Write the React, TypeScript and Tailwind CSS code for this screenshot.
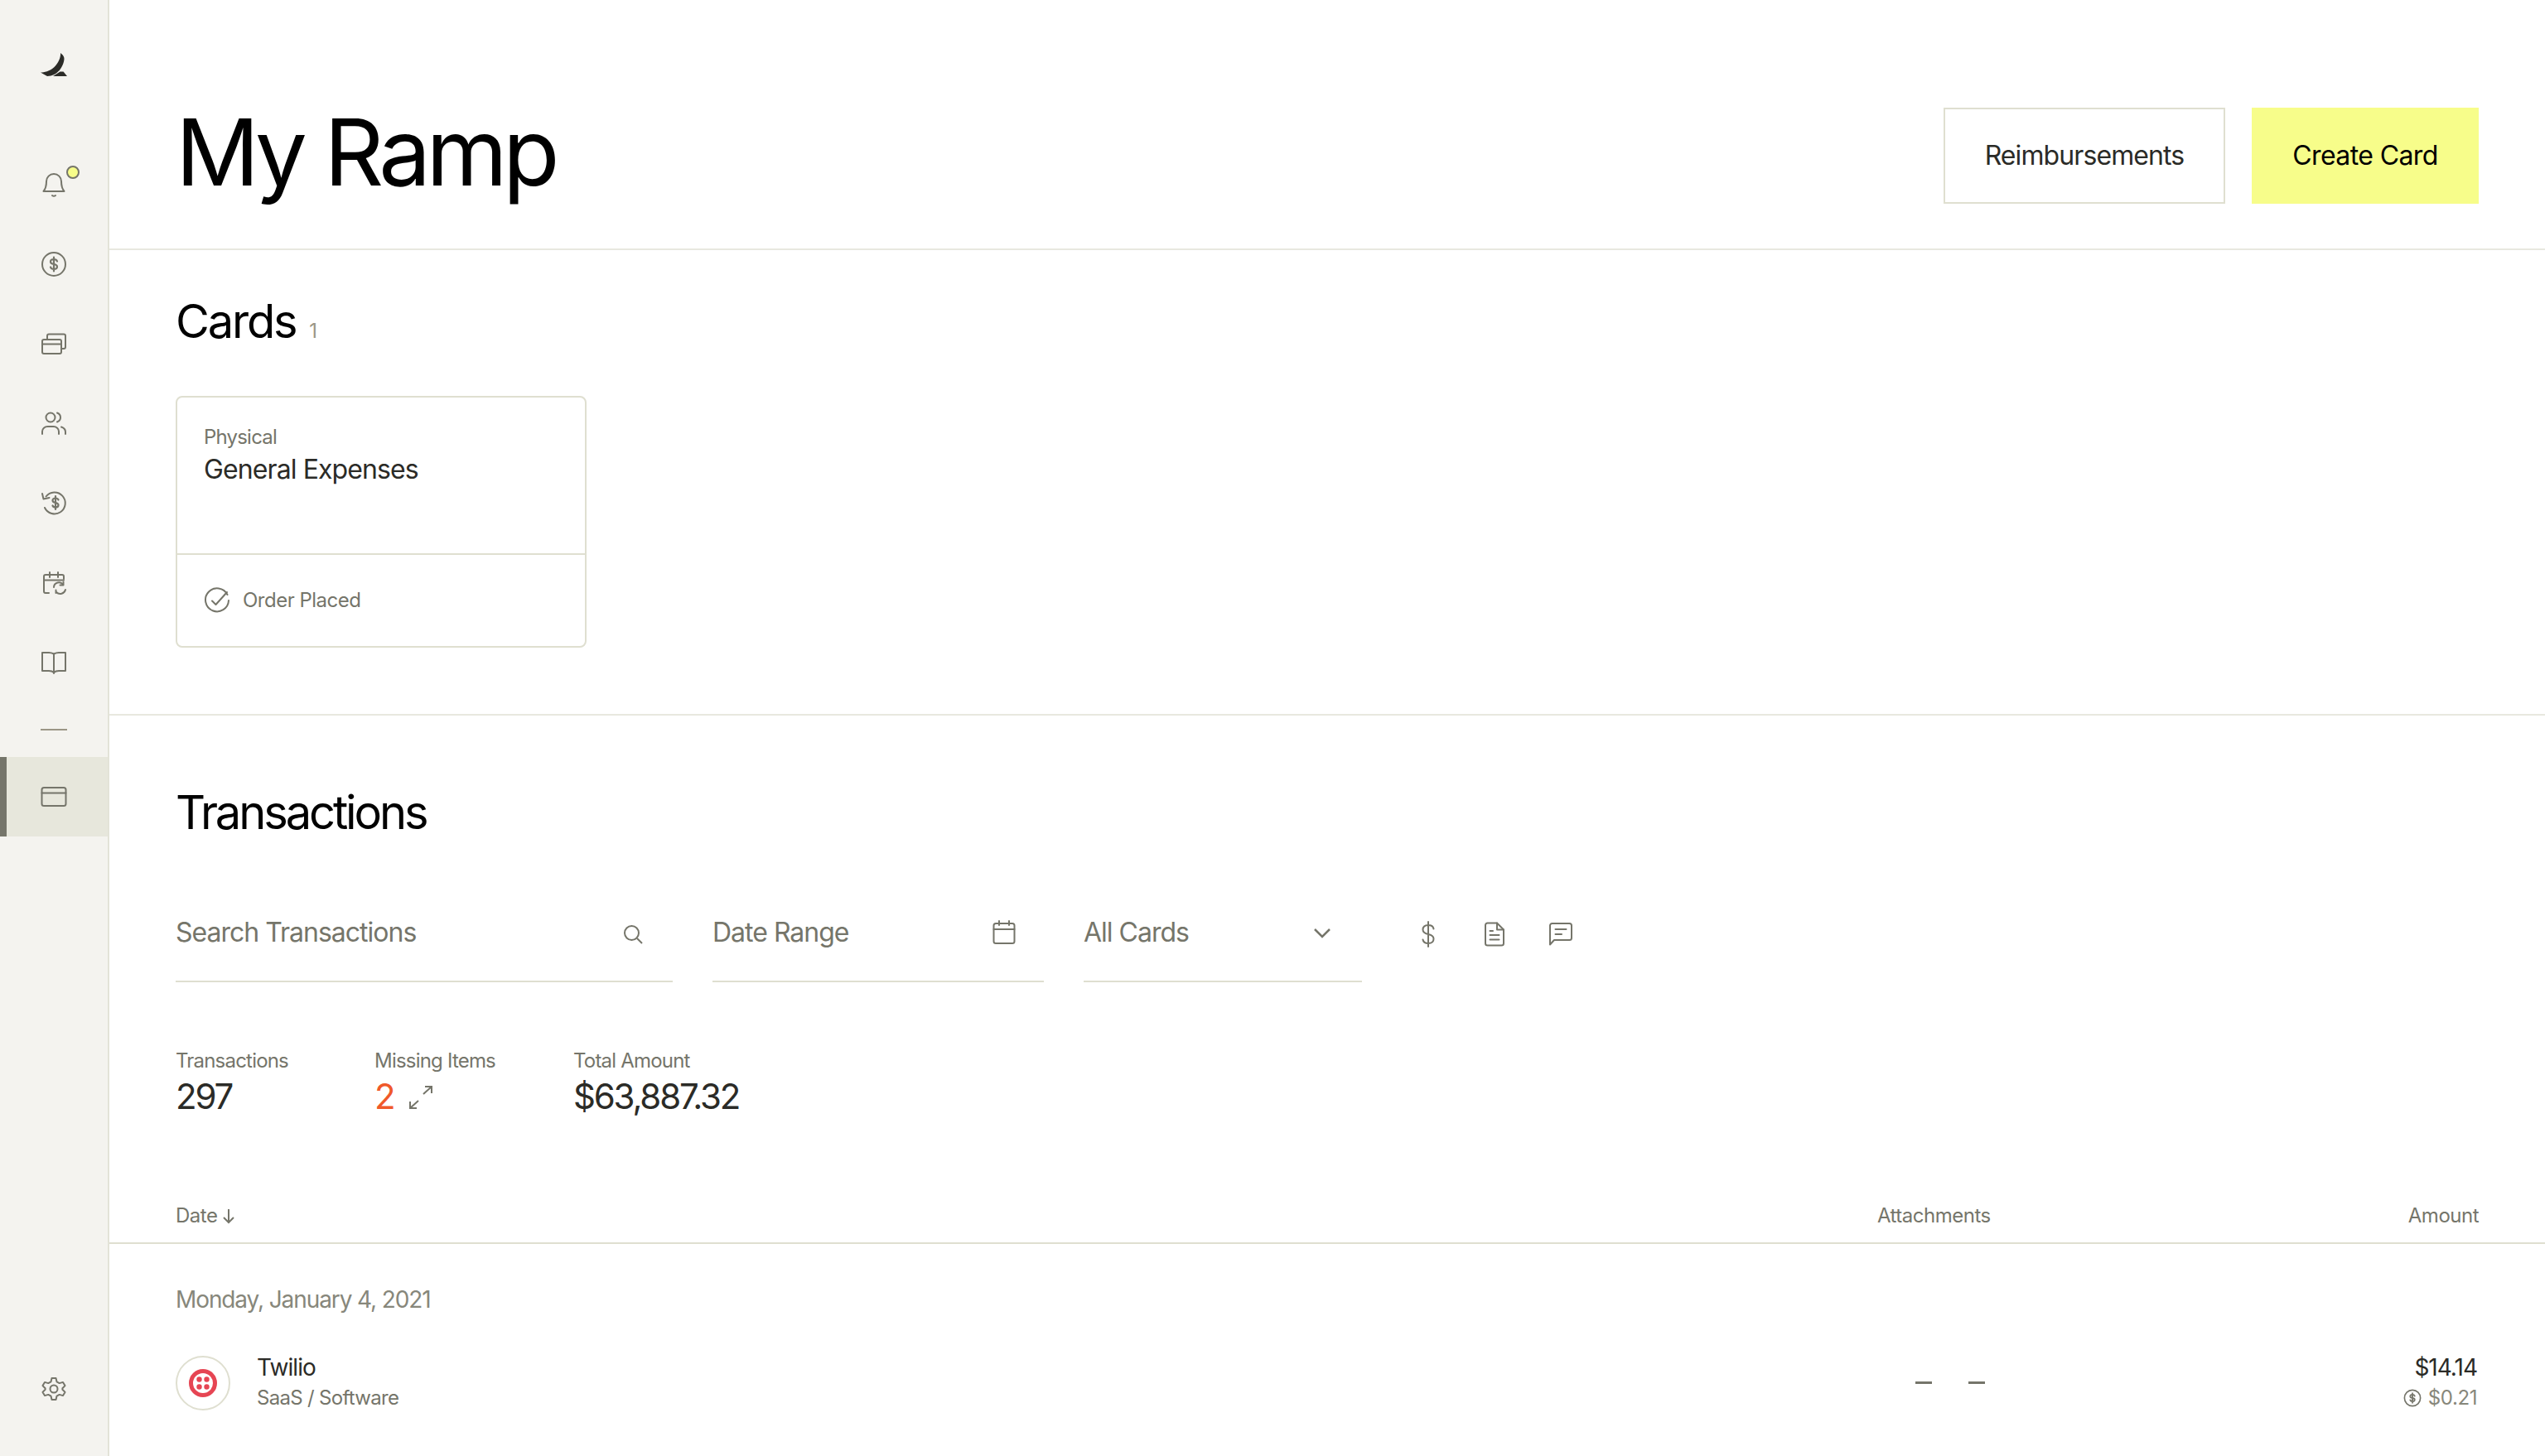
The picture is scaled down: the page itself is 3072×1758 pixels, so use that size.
import React from "react";

const Icon: React.FC<{ size?: number; children: React.ReactNode; className?: string }> = ({ size = 32, children, className }) => (
  <svg
    width={size}
    height={size}
    viewBox="0 0 32 32"
    fill="none"
    stroke="#75756a"
    strokeWidth={2}
    strokeLinecap="round"
    strokeLinejoin="round"
    className={className}
  >
    {children}
  </svg>
);

const dollar = "M20 12.5c-.5-1.5-2-2.5-4-2.5-2.5 0-4 1.3-4 3s1.5 2.6 4 3 4 1.3 4 3-1.5 3-4 3c-2 0-3.5-1-4-2.5M16 7.5v17";

const NavItem: React.FC<{ children: React.ReactNode }> = ({ children }) => (
  <div className="relative flex h-[96.3px] items-center justify-center">{children}</div>
);

const Sidebar = () => (
  <aside className="flex h-full w-[132px] shrink-0 flex-col border-r-2 border-[#e3e3d8] bg-[#f4f3ef]">
    <div className="flex h-[174px] shrink-0 justify-center pt-[62px]">
      <svg width="32" height="32" viewBox="0 0 32 32" fill="#2b2b27">
        <path d="M24 2C25.500 3.500 28.500 5 28.500 9 28 18 20.500 30 8 30L0 25.500C4 25.500 11 24 16.500 19 21 14.500 24.500 8 24 2Z" />
        <path d="M15 30 23.500 24.500 27.500 24.500 32 30Z" />
      </svg>
    </div>
    <NavItem>
      <Icon>
        <path d="M3.500 25C6 22 7 19 7 13A9 9 0 0 1 25 13C25 19 26 22 28.500 25Z" />
        <path d="M14 30Q16 31.500 18 30" />
      </Icon>
      <span className="absolute left-[80px] top-[26px] size-[16px] rounded-full border-2 border-[#75756a] bg-[#f7fd8a]" />
    </NavItem>
    <NavItem>
      <Icon className="mt-[2px]">
        <circle cx="16" cy="16" r="14" />
        <path d={dollar} strokeWidth={2.200} />
      </Icon>
    </NavItem>
    <NavItem>
      <Icon>
        <rect x="2" y="11" width="23" height="17" rx="2" />
        <path d="M2 16.500H25" />
        <path d="M8 11V6.500A2 2 0 0 1 10 4.500H28A2 2 0 0 1 30 6.500V20A2 2 0 0 1 28 22H25" />
      </Icon>
    </NavItem>
    <NavItem>
      <Icon>
        <circle cx="12" cy="9" r="5.500" />
        <path d="M2 29V26C2 22.500 5 20 8.500 20H15.500C19 20 22 22.500 22 26V29" />
        <path d="M20 3.500C22.500 4.500 24 6.500 24 9S22.500 13.500 20 14.500" />
        <path d="M25 20.500C28 21.500 30 23.500 30 26.500V29" />
      </Icon>
    </NavItem>
    <NavItem>
      <Icon>
        <path d="M6.500 8.500A13 13 0 1 1 5 22" />
        <path d="M2 5 3.500 11.500 10.500 10" />
        <path d="M21.500 12.500c-.5-1.200-1.800-2-3.500-2-2.200 0-3.500 1.100-3.500 2.700s1.300 2.300 3.500 2.800 3.500 1.100 3.500 2.700-1.300 2.800-3.500 2.800c-1.700 0-3-.8-3.500-2M18 8v16" strokeWidth={2.200} />
      </Icon>
    </NavItem>
    <NavItem>
      <Icon>
        <path d="M10 28H6A2 2 0 0 1 4 26V8A2 2 0 0 1 6 6H26A2 2 0 0 1 28 8V11" />
        <path d="M4 12.500H28M11 3V9M21 3V9" />
        <path d="M16 21A6 6 0 0 1 27 18M30 24A6.500 6.500 0 0 1 19 27" />
        <path d="M27.500 14.500V18.500H23.500M18.500 24.500V28" />
      </Icon>
    </NavItem>
    <NavItem>
      <Icon className="-mt-[2px]">
        <path d="M16 6.500 Q13 5 10 5H2V27H10Q14 27 16 29Q18 27 22 27H30V5H22Q19 5 16 6.500Z" />
        <path d="M16 6.500V30" />
      </Icon>
    </NavItem>
    <div className="flex h-[66px] shrink-0 items-center justify-center">
      <div className="h-[2px] w-[32px] bg-[#9b9686]" />
    </div>
    <div className="flex h-[96px] shrink-0 items-center justify-center border-l-[8px] border-[#75756a] bg-[#e7e7dc] pr-[8px]">
      <Icon>
        <rect x="1.500" y="5" width="29" height="22" rx="2.500" />
        <path d="M1.500 11.500H30.500" />
      </Icon>
    </div>
    <div className="mt-auto flex justify-center pb-[65px]">
      <Icon>
        <circle cx="16" cy="16" r="4.500" />
        <path d="M13.500 3H18.500L19.500 7.300 22.700 9.100 27 7.900 29.500 12.100 26.400 15.300V16.700L29.500 19.900 27 24.100 22.700 22.900 19.500 24.700 18.500 29H13.500L12.500 24.700 9.300 22.900 5 24.100 2.500 19.900 5.600 16.700V15.300L2.500 12.100 5 7.900 9.300 9.100 12.500 7.300Z" />
      </Icon>
    </div>
  </aside>
);

const FilterField: React.FC<{ label: string; width: string; children: React.ReactNode }> = ({ label, width, children }) => (
  <div className={`flex h-[79px] items-start justify-between border-b-2 border-[#dfdfd0] ${width}`}>
    <span className="text-[32px] leading-[38px] tracking-[-1px] text-[#75756a]">{label}</span>
    {children}
  </div>
);

const Stat: React.FC<{ label: string; width: string; children: React.ReactNode }> = ({ label, width, children }) => (
  <div className={width}>
    <div className="text-[24px] leading-[28px] tracking-[-0.8px] text-[#75756a]">{label}</div>
    <div className="mt-[3px] flex h-[50px] items-center text-[42px] tracking-[-2.2px] text-[#2b2b27]">{children}</div>
  </div>
);

export default function App() {
  return (
    <div className="flex h-[1758px] w-[3072px] overflow-hidden bg-white font-['Inter',sans-serif]">
      <Sidebar />
      <main className="flex min-w-0 flex-1 flex-col">
        <header className="flex h-[302px] shrink-0 items-start justify-between border-b-2 border-[#e8e8df] pl-[80px] pr-[80px] pt-[130px]">
          <h1 className="-mt-[11px] text-[112px] font-normal leading-[128px] tracking-[-5.6px] text-black">My Ramp</h1>
          <div className="flex gap-[32px]">
            <button className="h-[116px] w-[340px] border-2 border-[#dfdfd0] text-[32px] tracking-[-0.9px] text-[#2b2b27]">Reimbursements</button>
            <button className="h-[116px] w-[274px] bg-[#f7fd8a] text-[32px] tracking-[-0.6px] text-black">Create Card</button>
          </div>
        </header>

        <section className="h-[562px] shrink-0 border-b-2 border-[#e8e8df] px-[80px] pt-[51px]">
          <div className="flex items-baseline gap-[16px]">
            <h2 className="text-[56px] font-normal leading-[70px] tracking-[-2.2px] text-black">Cards</h2>
            <span className="text-[24px] text-[#9b9686]">1</span>
          </div>
          <div className="mt-[55px] w-[496px] rounded-[8px] border-2 border-[#dfdfd0]">
            <div className="h-[190px] border-b-2 border-[#dfdfd0] px-[32px] pt-[33px]">
              <div className="text-[24px] leading-[30px] tracking-[-0.8px] text-[#75756a]">Physical</div>
              <div className="mt-[5px] text-[32px] leading-[38px] tracking-[-0.9px] text-[#2b2b27]">General Expenses</div>
            </div>
            <div className="flex h-[110px] items-center gap-[15px] px-[32px]">
              <Icon>
                <path d="M28.500 9A14 14 0 1 0 30 16" />
                <path d="M10 16.500 14.500 21 28 6" />
              </Icon>
              <span className="text-[24px] tracking-[-0.5px] text-[#75756a]">Order Placed</span>
            </div>
          </div>
        </section>

        <section className="flex-1">
          <div className="px-[80px] pt-[82px]">
            <h2 className="text-[56px] font-normal leading-[70px] tracking-[-3.1px] text-black">Transactions</h2>
            <div className="mt-[91px] flex items-start">
              <FilterField label="Search Transactions" width="w-[600px]">
                <svg width="26" height="26" viewBox="0 0 26 26" fill="none" stroke="#75756a" strokeWidth="2" className="mr-[35px] mt-[8px]">
                  <circle cx="11.500" cy="11.500" r="8.500" />
                  <path d="M18 18 24 24" />
                </svg>
              </FilterField>
              <FilterField label="Date Range" width="ml-[48px] w-[400px]">
                <Icon className="mr-[32px] mt-[3px]">
                  <rect x="3.500" y="5" width="25" height="24" rx="2.500" />
                  <path d="M3.500 12H28.500M10 2V7M22 2V7" />
                </Icon>
              </FilterField>
              <FilterField label="All Cards" width="ml-[48px] w-[336px]">
                <svg width="20" height="12" viewBox="0 0 20 12" fill="none" stroke="#75756a" strokeWidth="2.500" className="mr-[38px] mt-[14px]">
                  <path d="M1 1 10 10 19 1" />
                </svg>
              </FilterField>
              <div className="ml-[64px] flex gap-[48px] pt-[5px]">
                <Icon>
                  <path d="M22.500 9.500C22 6.500 19.500 5 16 5 12 5 9.500 7 9.500 10.500S12 15 16 16 22.500 18 22.500 21.500 20 27 16 27C12.500 27 10 25.500 9.500 22.500M16 1V31" />
                </Icon>
                <Icon>
                  <path d="M5 5A2.500 2.500 0 0 1 7.500 2.500H19L27 10.500V27A2.500 2.500 0 0 1 24.500 29.500H7.500A2.500 2.500 0 0 1 5 27Z" />
                  <path d="M19 2.500V10.500H27M10.500 12H14M10.500 17H21.500M10.500 22.500H21.500" />
                </Icon>
                <Icon>
                  <path d="M3 5.500A2.500 2.500 0 0 1 5.500 3H26.500A2.500 2.500 0 0 1 29 5.500V20.500A2.500 2.500 0 0 1 26.500 23H8L3 28.500Z" />
                  <path d="M9.500 10H22.500M9.500 16H17" />
                </Icon>
              </div>
            </div>

            <div className="mt-[81px] flex">
              <Stat label="Transactions" width="w-[240px]">297</Stat>
              <Stat label="Missing Items" width="w-[240px]">
                <span className="text-[#f0592a]">2</span>
                <svg width="30" height="30" viewBox="0 0 30 30" fill="none" stroke="#75756a" strokeWidth="2" className="ml-[18px] mt-[3px]">
                  <path d="M18 11 28 2M20 2H28V10M12 19 2 28M2 20V28H10" />
                </svg>
              </Stat>
              <Stat label="Total Amount" width="w-auto">$63,887.32</Stat>
            </div>
          </div>

          <div className="mt-[105px] flex h-[49px] items-start border-b-2 border-[#dfdfd0] pl-[80px] pr-[80px] text-[24px] leading-[30px] tracking-[-0.5px] text-[#75756a]">
            <div className="flex flex-1 items-center gap-[5px]">
              Date
              <svg width="18" height="20" viewBox="0 0 18 20" fill="none" stroke="#75756a" strokeWidth="2">
                <path d="M9 2V18M3 12 9 18 15 12" />
              </svg>
            </div>
            <div className="w-[136px]">Attachments</div>
            <div className="w-[590px] text-right">Amount</div>
          </div>

          <div className="px-[80px] pt-[49px]">
            <div className="text-[28px] leading-[36px] tracking-[-1.1px] text-[#87877b]">Monday, January 4, 2021</div>
            <div className="mt-[47px] flex items-center">
              <div className="mt-[2px] flex size-[66px] items-center justify-center rounded-full border-2 border-[#dfdfd0]">
                <svg width="34" height="34" viewBox="0 0 34 34">
                  <circle cx="17" cy="17" r="14.500" fill="none" stroke="#e64553" strokeWidth="5" />
                  <circle cx="12.500" cy="12.500" r="3.200" fill="#e64553" />
                  <circle cx="21.500" cy="12.500" r="3.200" fill="#e64553" />
                  <circle cx="12.500" cy="21.500" r="3.200" fill="#e64553" />
                  <circle cx="21.500" cy="21.500" r="3.200" fill="#e64553" />
                </svg>
              </div>
              <div className="ml-[32px] flex-1">
                <div className="text-[28px] leading-[34px] tracking-[-0.9px] text-[#2b2b27]">Twilio</div>
                <div className="mt-[5px] text-[24px] leading-[30px] tracking-[-0.7px] text-[#75756a]">SaaS / Software</div>
              </div>
              <div className="mt-[2px] flex w-[84px] justify-between">
                <span className="h-[3px] w-[20px] bg-[#75756a]" />
                <span className="h-[3px] w-[20px] bg-[#75756a]" />
              </div>
              <div className="w-[596px] text-right">
                <div className="pr-[2px] text-[28px] leading-[34px] tracking-[-1px] text-[#2b2b27]">$14.14</div>
                <div className="mt-[5px] flex items-center justify-end gap-[8px] pr-[2px] text-[24px] leading-[30px] tracking-[-0.4px] text-[#87877b]">
                  <Icon size={22}>
                    <circle cx="16" cy="16" r="14" strokeWidth={2.400} />
                    <path d={dollar} strokeWidth={2.600} />
                  </Icon>
                  $0.21
                </div>
              </div>
            </div>
          </div>
        </section>
      </main>
    </div>
  );
}
